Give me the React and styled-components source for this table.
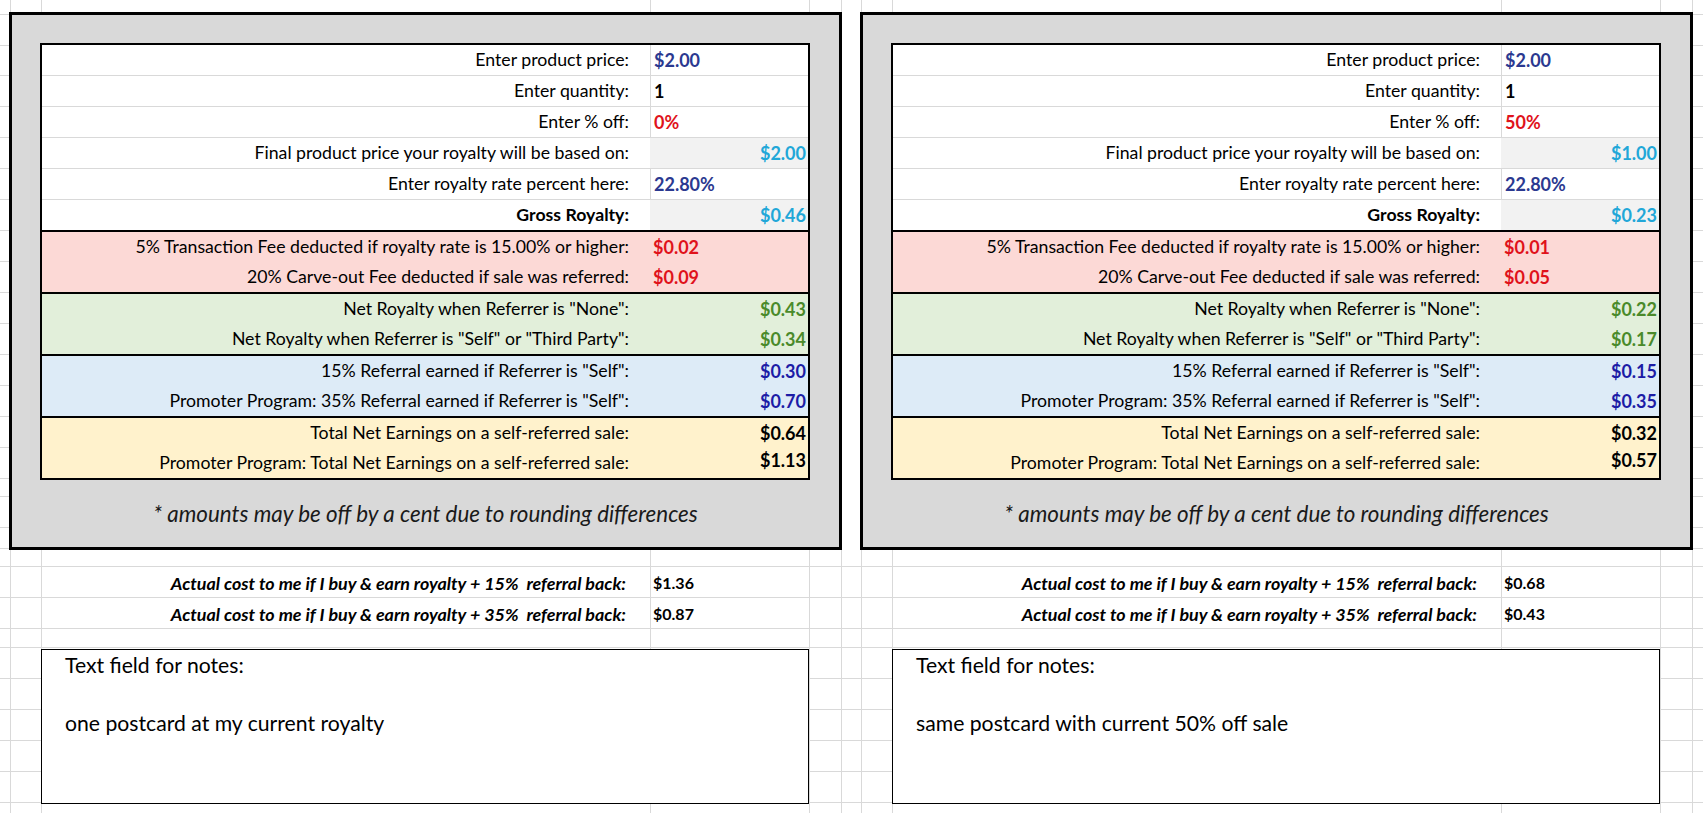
import React from "react";
import styled, { createGlobalStyle } from "styled-components";

//
// --- Sheet constants ---
const GRID = "#d9d9d9";
const FONT = `Lato, "Noto Sans", sans-serif`;
const COL_LINES = [10, 41, 650, 809, 841, 861, 892, 1501, 1660, 1692];
const ROW_LINES = [
  14, 45, 75, 106, 137, 168, 199, 230, 261, 292, 323, 354, 385, 416, 447, 478,
  496, 527, 548, 566, 597, 628, 647, 678, 709, 740, 771, 802,
];

const gridBackground = () => {
  const line = `linear-gradient(${GRID}, ${GRID})`;
  const images = [...COL_LINES, ...ROW_LINES].map(() => line);
  const positions = [
    ...COL_LINES.map(x => `${x}px 0`),
    ...ROW_LINES.map(y => `0 ${y}px`),
  ];
  const sizes = [
    ...COL_LINES.map(() => "1px 100%"),
    ...ROW_LINES.map(() => "100% 1px"),
  ];
  return `
    background-image: ${images.join(", ")};
    background-position: ${positions.join(", ")};
    background-size: ${sizes.join(", ")};
    background-repeat: no-repeat;
  `;
};

const COLORS = {
  blue: "#2b3990",
  cyan: "#21a7d8",
  red: "#e0121b",
  green: "#4a8a2a",
  navy: "#1c1ca6",
  black: "#000",
};

const BANDS = {
  pink: "#fcd9d6",
  green: "#e2efda",
  blue: "#ddebf7",
  yellow: "#fff2cc",
};

//
// --- Styled Components ---
const GlobalStyle = createGlobalStyle`
  html, body {
    margin: 0;
    padding: 0;
    background: #fff;
  }
  body {
    font-family: ${FONT};
    color: #000;
  }
`;

const StyledSheet = styled.div`
  position: relative;
  width: 1703px;
  height: 813px;
  overflow: hidden;
  box-sizing: border-box;
  padding-top: 12px;
  background-color: #fff;
  ${gridBackground}
`;

const StyledSheetRow = styled.div`
  display: flex;
  gap: 18px;
  width: max-content;
  margin-left: 9px;
  margin-top: ${props => props.$top || 0}px;
  background: ${props => (props.$solid ? "#fff" : "transparent")};
`;

const StyledPanel = styled.div`
  width: 833px;
  box-sizing: border-box;
  border: 3px solid #000;
  background: #d9d9d9;
  padding: 28px 28px 0;
`;

const StyledTable = styled.div`
  width: 770px;
  box-sizing: border-box;
  border: 2px solid #000;
  background: #fff;
`;

const StyledBand = styled.div`
  background: ${props => BANDS[props.$tone] || "#fff"};
  border-top: ${props => (props.$tone ? "2px solid #000" : "none")};
`;

const StyledRow = styled.div`
  display: grid;
  grid-template-columns: 608px 1fr;
  height: ${props => (props.$line ? 31 : 30)}px;
  box-sizing: border-box;
  border-bottom: ${props => (props.$line ? `1px solid ${GRID}` : "none")};
  font-size: 17.7px;
  line-height: 30px;
`;

const StyledLabel = styled.div`
  text-align: right;
  padding-right: 21px;
  white-space: nowrap;
  font-weight: ${props => (props.$bold ? 700 : 400)};
`;

const StyledValue = styled.div`
  font-weight: 700;
  font-size: 18px;
  white-space: nowrap;
  color: ${props => COLORS[props.$color] || "#000"};
  text-align: ${props => (props.$right ? "right" : "left")};
  padding: ${props => (props.$right ? "0 2px 0 0" : "0 0 0 3px")};
  background: ${props => (props.$shade ? "#f2f2f2" : "transparent")};
  border-left: ${props => (props.$divider ? `1px solid ${GRID}` : "none")};
  margin-top: ${props => (props.$raised ? -3 : 0)}px;
`;

const StyledFootnote = styled.div`
  height: 66px;
  display: flex;
  align-items: center;
  justify-content: center;
  font-style: italic;
  font-size: 22.4px;
  color: #1a1a1a;
  padding-bottom: 1px;
`;

const StyledCostBlock = styled.div`
  width: 833px;
`;

const StyledCostRow = styled.div`
  display: grid;
  grid-template-columns: 641px 1fr;
  height: 31px;
  line-height: 30px;
  font-size: 17.9px;
  font-weight: 700;
`;

const StyledCostLabel = styled.div`
  text-align: right;
  padding-right: 24px;
  font-style: italic;
  white-space: nowrap;
`;

const StyledCostValue = styled.div`
  padding-left: 3px;
  font-size: 16px;
`;

const StyledNotesSlot = styled.div`
  width: 833px;
  padding-left: 32px;
  box-sizing: border-box;
`;

const StyledNotesBox = styled.div`
  width: 768px;
  height: 155px;
  box-sizing: border-box;
  border: 1px solid #000;
  background: #fff;
  padding: 0 0 0 23px;
  font-size: 21.2px;
  line-height: 30px;
`;

const StyledNotesTitle = styled.div`
  margin-bottom: 28px;
`;

//
// --- Data ---
const scenarios = [
  {
    inputs: ["$2.00", "1", "0%", "$2.00", "22.80%", "$0.46"],
    fees: ["$0.02", "$0.09"],
    net: ["$0.43", "$0.34"],
    referral: ["$0.30", "$0.70"],
    totals: ["$0.64", "$1.13"],
    costs: ["$1.36", "$0.87"],
    note: "one postcard at my current royalty",
  },
  {
    inputs: ["$2.00", "1", "50%", "$1.00", "22.80%", "$0.23"],
    fees: ["$0.01", "$0.05"],
    net: ["$0.22", "$0.17"],
    referral: ["$0.15", "$0.35"],
    totals: ["$0.32", "$0.57"],
    costs: ["$0.68", "$0.43"],
    note: "same postcard with current 50% off sale",
  },
];

const inputRows = [
  { label: "Enter product price:", color: "blue", divider: true },
  { label: "Enter quantity:", color: "black", divider: true },
  { label: "Enter % off:", color: "red", divider: true },
  { label: "Final product price your royalty will be based on:", color: "cyan", shade: true, right: true },
  { label: "Enter royalty rate percent here:", color: "blue", divider: true },
  { label: "Gross Royalty:", color: "cyan", shade: true, right: true, bold: true },
];

const bands = [
  {
    tone: "pink",
    key: "fees",
    color: "red",
    right: false,
    labels: [
      "5% Transaction Fee deducted if royalty rate is 15.00% or higher:",
      "20% Carve-out Fee deducted if sale was referred:",
    ],
  },
  {
    tone: "green",
    key: "net",
    color: "green",
    right: true,
    labels: [
      'Net Royalty when Referrer is "None":',
      'Net Royalty when Referrer is "Self" or "Third Party":',
    ],
  },
  {
    tone: "blue",
    key: "referral",
    color: "navy",
    right: true,
    labels: [
      '15% Referral earned if Referrer is "Self":',
      'Promoter Program: 35% Referral earned if Referrer is "Self":',
    ],
  },
  {
    tone: "yellow",
    key: "totals",
    color: "black",
    right: true,
    labels: [
      "Total Net Earnings on a self-referred sale:",
      "Promoter Program: Total Net Earnings on a self-referred sale:",
    ],
  },
];

const costLabels = [
  "Actual cost to me if I buy & earn royalty + 15%\u00a0 referral back:",
  "Actual cost to me if I buy & earn royalty + 35%\u00a0 referral back:",
];

//
// --- Calculator Panel ---
const CalculatorPanel = ({ scenario }) => (
  <StyledPanel>
    <StyledTable>
      <StyledBand>
        {inputRows.map((row, i) => (
          <StyledRow key={row.label} $line={i < inputRows.length - 1}>
            <StyledLabel $bold={row.bold}>{row.label}</StyledLabel>
            <StyledValue
              $color={row.color}
              $shade={row.shade}
              $right={row.right}
              $divider={row.divider}
            >
              {scenario.inputs[i]}
            </StyledValue>
          </StyledRow>
        ))}
      </StyledBand>
      {bands.map(band => (
        <StyledBand key={band.tone} $tone={band.tone}>
          {band.labels.map((label, i) => (
            <StyledRow key={label}>
              <StyledLabel>{label}</StyledLabel>
              <StyledValue
                $color={band.color}
                $right={band.right}
                $raised={band.tone === "yellow" && i === 1}
              >
                {scenario[band.key][i]}
              </StyledValue>
            </StyledRow>
          ))}
        </StyledBand>
      ))}
    </StyledTable>
    <StyledFootnote>
      * amounts may be off by a cent due to rounding differences
    </StyledFootnote>
  </StyledPanel>
);

const App = () => {
  return (
    <StyledSheet>
      <GlobalStyle />
      <StyledSheetRow $solid>
        {scenarios.map((scenario, i) => (
          <CalculatorPanel key={i} scenario={scenario} />
        ))}
      </StyledSheetRow>
      <StyledSheetRow $top={18}>
        {scenarios.map((scenario, i) => (
          <StyledCostBlock key={i}>
            {costLabels.map((label, j) => (
              <StyledCostRow key={label}>
                <StyledCostLabel>{label}</StyledCostLabel>
                <StyledCostValue>{scenario.costs[j]}</StyledCostValue>
              </StyledCostRow>
            ))}
          </StyledCostBlock>
        ))}
      </StyledSheetRow>
      <StyledSheetRow $top={19}>
        {scenarios.map((scenario, i) => (
          <StyledNotesSlot key={i}>
            <StyledNotesBox>
              <StyledNotesTitle>Text field for notes:</StyledNotesTitle>
              <div>{scenario.note}</div>
            </StyledNotesBox>
          </StyledNotesSlot>
        ))}
      </StyledSheetRow>
    </StyledSheet>
  );
};

export default App;
